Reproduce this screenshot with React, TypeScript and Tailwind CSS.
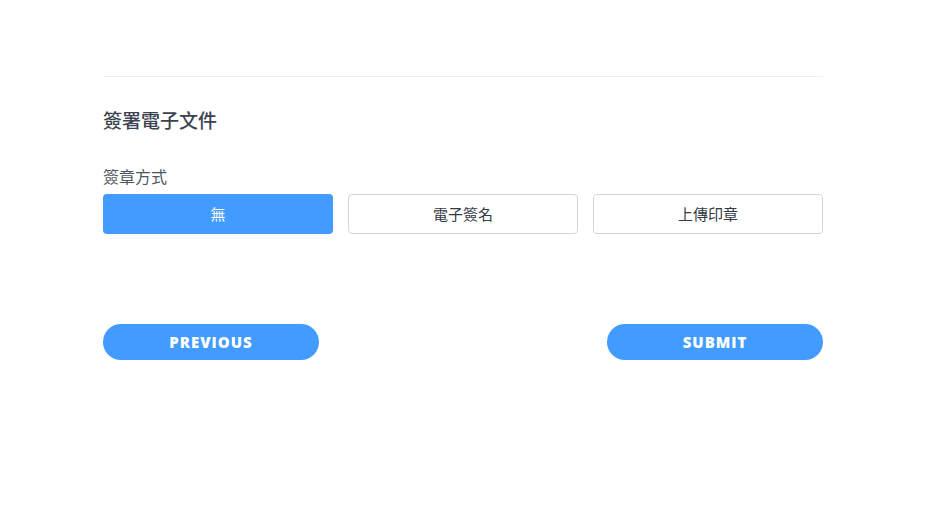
import { useState } from "react"

const options = ["無", "電子簽名", "上傳印章"]

export default function App() {
  const [method, setMethod] = useState(0)

  return (
    <div className="min-h-screen bg-white font-['Noto_Sans','Noto_Sans_CJK_TC',sans-serif]">
      <div className="w-[720px] ml-[103px] pt-[76px]">
        {/* Divider */}
        <div className="border-t border-[#ebebf0]" />

        {/* Section title */}
        <h2 className="mt-[31px] text-[19px] leading-[26px] font-medium text-[#3b4350]">簽署電子文件</h2>

        {/* Signature method */}
        <div className="mt-[33px]">
          <label className="block text-[16px] leading-[20px] text-[#505660]">簽章方式</label>
          <div className="mt-[7px] grid grid-cols-3 gap-[15px]">
            {options.map((opt, i) => (
              <button
                key={opt}
                onClick={() => setMethod(i)}
                className={
                  i === method
                    ? "h-[40px] rounded-[4px] bg-[#429bff] text-white text-[15px]"
                    : "h-[40px] rounded-[4px] border border-[#d3d6de] bg-white text-[#333a44] text-[15px]"
                }
              >
                {opt}
              </button>
            ))}
          </div>
        </div>

        {/* Navigation */}
        <div className="mt-[90px] flex justify-between">
          <button className="w-[216px] h-[36px] rounded-full bg-[#429bff] text-white text-[15px] font-extrabold tracking-[1px] font-['Open_Sans',sans-serif]">
            PREVIOUS
          </button>
          <button className="w-[216px] h-[36px] rounded-full bg-[#429bff] text-white text-[15px] font-extrabold tracking-[1px] font-['Open_Sans',sans-serif]">
            SUBMIT
          </button>
        </div>
      </div>
    </div>
  )
}
